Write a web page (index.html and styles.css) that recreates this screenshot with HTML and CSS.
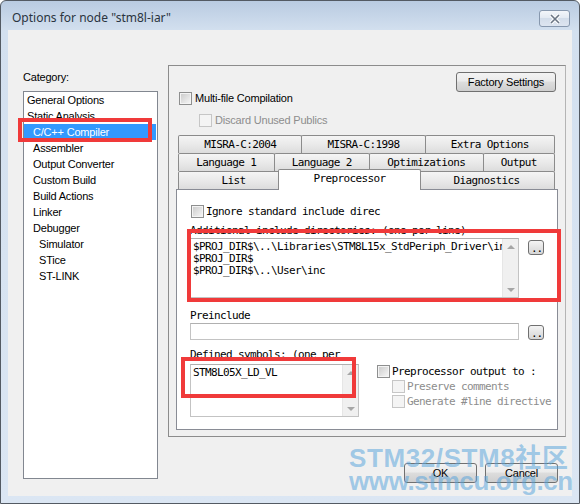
FILE: index.html
```html
<!DOCTYPE html>
<html lang="en">
<head>
    <meta charset="UTF-8">
    <title>Options for node "stm8l-iar"</title>
    <link rel="stylesheet" href="styles.css">
</head>
<body>
    <div class="window">
        <div class="titlebar">
            <span class="title">Options for node "stm8l-iar"</span>
            <button class="close">
                <svg width="12" height="10" viewBox="0 0 12 10">
                    <path d="M2 1 L10 9 M10 1 L2 9" stroke="#fdfdfd" stroke-width="3.6" fill="none"/>
                    <path d="M2 1 L10 9 M10 1 L2 9" stroke="#6a7584" stroke-width="1.6" fill="none"/>
                </svg>
            </button>
        </div>

        <div class="client">
            <div class="left-col">
                <div class="cat-label">Category:</div>
                <ul class="cat-list">
                    <li>General Options</li>
                    <li>Static Analysis</li>
                    <li class="lv1 selected">C/C++ Compiler</li>
                    <li class="lv1">Assembler</li>
                    <li class="lv1">Output Converter</li>
                    <li class="lv1">Custom Build</li>
                    <li class="lv1">Build Actions</li>
                    <li class="lv1">Linker</li>
                    <li class="lv1">Debugger</li>
                    <li class="lv2">Simulator</li>
                    <li class="lv2">STice</li>
                    <li class="lv2">ST-LINK</li>
                </ul>
            </div>

            <div class="right-col">
                <div class="group">
                    <div class="group-head">
                        <button class="btn factory">Factory Settings</button>
                    </div>
                    <div class="check multi"><span class="box"></span>Multi-file Compilation</div>
                    <div class="check discard disabled"><span class="box"></span>Discard Unused Publics</div>

                    <div class="tabs">
                        <div class="tab-row">
                            <div class="tab">MISRA-C:2004</div>
                            <div class="tab">MISRA-C:1998</div>
                            <div class="tab">Extra Options</div>
                        </div>
                        <div class="tab-row">
                            <div class="tab">Language 1</div>
                            <div class="tab">Language 2</div>
                            <div class="tab">Optimizations</div>
                            <div class="tab">Output</div>
                        </div>
                        <div class="tab-row">
                            <div class="tab tab-list">List</div>
                            <div class="tab active">Preprocessor</div>
                            <div class="tab">Diagnostics</div>
                        </div>
                    </div>

                    <div class="page">
                        <div class="check mono ignore"><span class="box"></span>Ignore standard include direc</div>

                        <div class="field-label inc-label">Additional include directories: (one per line)</div>
                        <div class="field-row">
                            <div class="textbox inc-box">
                                <div class="text">$PROJ_DIR$\..\Libraries\STM8L15x_StdPeriph_Driver\inc
$PROJ_DIR$
$PROJ_DIR$\..\User\inc</div>
                                <div class="scroll"><span class="arrow-up"></span><span class="arrow-down"></span></div>
                            </div>
                            <button class="browse">..</button>
                        </div>

                        <div class="field-label pre-label">Preinclude</div>
                        <div class="field-row">
                            <div class="textbox pre-box"></div>
                            <button class="browse">..</button>
                        </div>

                        <div class="field-label def-label">Defined symbols: (one per</div>
                        <div class="field-row def-row">
                            <div class="textbox def-box">
                                <div class="text">STM8L05X_LD_VL</div>
                                <div class="scroll"><span class="arrow-up"></span><span class="arrow-down"></span></div>
                            </div>
                            <div class="pp-opts">
                                <div class="check mono"><span class="box"></span>Preprocessor output to :</div>
                                <div class="check mono disabled sub"><span class="box"></span>Preserve comments</div>
                                <div class="check mono disabled sub"><span class="box"></span>Generate #line directive</div>
                            </div>
                        </div>
                    </div>
                </div>

                <div class="dialog-buttons">
                    <button class="btn wide">OK</button>
                    <button class="btn wide">Cancel</button>
                </div>
            </div>
        </div>

        <!-- red highlight frames -->
        <div class="mark mark-cat"></div>
        <div class="mark mark-inc"></div>
        <div class="mark mark-def"></div>

        <div class="watermark">
            <div class="wm-name">STM32/STM8社区</div>
            <div class="wm-site">www.stmcu.org.cn</div>
        </div>
    </div>
</body>
</html>
```

FILE: styles.css
```css
body {
    margin: 0;
    background: #fff;
}
.window {
    position: relative;
    width: 580px;
    height: 504px;
    box-sizing: border-box;
    border: 1px solid #535a63;
    border-radius: 6px 6px 0 0;
    background: linear-gradient(#b9cbe1, #d3e0ef 30px, #dbe6f3);
    padding: 0 7px 7px 7px;
    display: flex;
    flex-direction: column;
    overflow: hidden;
    font-family: "Liberation Sans", Arial, sans-serif;
    font-size: 11px;
    letter-spacing: -0.2px;
    color: #000;
}
.titlebar {
    height: 29px;
    display: flex;
    align-items: flex-start;
    padding-left: 4px;
}
.title {
    margin-top: 9px;
    font-family: "Noto Sans", sans-serif;
    font-size: 12px;
    line-height: 16px;
    letter-spacing: 0;
    color: #2a3440;
}
.close {
    margin: 9px 2px 0 auto;
    width: 31px;
    height: 17px;
    padding: 0;
    box-sizing: border-box;
    border: 1px solid #8798ae;
    border-radius: 3px;
    background: linear-gradient(#f3f6fa, #e2e9f2 50%, #d3ddea 50%, #dde5f0);
    display: flex;
    align-items: center;
    justify-content: center;
}
.client {
    flex: 1;
    background: #f0f0f0;
    display: flex;
    gap: 10px;
    padding: 35px 6px 0 15px;
    box-sizing: border-box;
}
.left-col {
    width: 135px;
}
.cat-label {
    margin-top: 5px;
    line-height: 14px;
}
.cat-list {
    margin: 7px 0 0;
    padding: 0;
    list-style: none;
    height: 388px;
    box-sizing: border-box;
    border: 1px solid #828790;
    background: #fff;
}
.cat-list li {
    height: 16px;
    line-height: 16px;
    padding-left: 3px;
    white-space: nowrap;
}
.cat-list .lv1 {
    padding-left: 9px;
}
.cat-list .lv2 {
    padding-left: 15px;
}
.cat-list .selected {
    background: #3399ff;
    color: #fff;
    margin-right: 1px;
}
.right-col {
    width: 398px;
    display: flex;
    flex-direction: column;
}
.group {
    height: 372px;
    box-sizing: border-box;
    border: 1px solid #8c8c8c;
    border-right-color: #b4b4b4;
    padding: 6px 7px;
    display: flex;
    flex-direction: column;
}
.group-head {
    display: flex;
    justify-content: flex-end;
    padding-right: 2px;
}
.btn {
    font-family: "Liberation Sans", Arial, sans-serif;
    font-size: 11px;
    letter-spacing: -0.2px;
    color: #000;
    height: 20px;
    padding: 0;
    box-sizing: border-box;
    border: 1px solid #707070;
    border-radius: 3px;
    background: linear-gradient(#f3f3f3, #ebebeb 45%, #dddddd 50%, #cfcfcf);
}
.factory {
    width: 100px;
}
.check {
    display: flex;
    align-items: center;
    gap: 3px;
    height: 13px;
    line-height: 13px;
    white-space: nowrap;
}
.check .box {
    flex: none;
    width: 13px;
    height: 13px;
    box-sizing: border-box;
    border: 1px solid #8e8f8f;
    background: linear-gradient(135deg, #c9c9c9, #f8f8f8);
    box-shadow: inset 0 0 0 1px #f4f4f4;
}
.check.disabled {
    color: #8d8d8d;
}
.check.disabled .box {
    border-color: #c6c6c6;
    background: #f4f4f4;
    box-shadow: none;
}
.multi {
    margin-left: 3px;
}
.discard {
    margin: 9px 0 0 23px;
}
.tabs {
    margin: 8px 3px 0 2px;
}
.tab-row {
    display: flex;
    align-items: flex-start;
    height: 18px;
}
.tab {
    flex: 1 1 auto;
    height: 18px;
    box-sizing: border-box;
    margin-left: -1px;
    border: 1px solid #8b8b8b;
    border-bottom: 0;
    border-radius: 2px 2px 0 0;
    background: linear-gradient(#f5f5f5, #e7e7e7 60%, #dcdcdc);
    text-align: center;
    font-family: "DejaVu Sans Mono", monospace;
    font-size: 11px;
    letter-spacing: -0.62px;
    line-height: 17px;
    white-space: nowrap;
}
.tab:first-child {
    margin-left: 0;
}
.tab-list {
    padding-left: 8px;
}
.tab.active {
    position: relative;
    z-index: 1;
    height: 21px;
    margin: -2px -2px 0 -3px;
    background: #fff;
    line-height: 18px;
}
.page {
    flex: 1;
    background: #fff;
    border: 1px solid #898c95;
    padding-left: 13px;
    font-family: "DejaVu Sans Mono", monospace;
    font-size: 11px;
    letter-spacing: -0.62px;
}
.check.mono {
    gap: 2px;
}
.ignore {
    margin: 15px 0 0 1px;
}
.field-label {
    height: 12px;
    line-height: 12px;
    white-space: nowrap;
}
.inc-label {
    margin-top: 7px;
}
.pre-label {
    margin-top: 12px;
}
.def-label {
    margin-top: 9px;
}
.field-row {
    display: flex;
    align-items: flex-start;
    margin-top: 1px;
}
.textbox {
    display: flex;
    box-sizing: border-box;
    border: 1px solid #c3c3c3;
    border-top-color: #b0b0b0;
    background: #fff;
}
.textbox .text {
    flex: 1;
    min-width: 0;
    padding: 2px 0 0 2px;
    line-height: 12px;
    overflow: hidden;
    white-space: pre;
}
.inc-box {
    width: 329px;
    height: 60px;
}
.pre-box {
    width: 329px;
    height: 17px;
}
.def-row {
    margin-top: 3px;
}
.def-box {
    width: 169px;
    height: 53px;
}
.scroll {
    width: 16px;
    box-sizing: border-box;
    background: #f0f0f0;
    border-left: 1px solid #e6e6e6;
    display: flex;
    flex-direction: column;
    justify-content: space-between;
    align-items: center;
    padding: 6px 0 5px;
}
.arrow-up {
    width: 0;
    height: 0;
    border-left: 4px solid transparent;
    border-right: 4px solid transparent;
    border-bottom: 4px solid #a6a6a6;
}
.arrow-down {
    width: 0;
    height: 0;
    border-left: 4px solid transparent;
    border-right: 4px solid transparent;
    border-top: 4px solid #a6a6a6;
}
.browse {
    width: 16px;
    height: 15px;
    margin: 2px 0 0 9px;
    padding: 0 0 0 1px;
    box-sizing: border-box;
    border: 1px solid #707070;
    border-radius: 3px;
    background: linear-gradient(#f4f4f4, #e4e4e4 50%, #d6d6d6);
    font-family: "DejaVu Sans Mono", monospace;
    font-size: 11px;
    letter-spacing: -1px;
    line-height: 16px;
    color: #000;
}
.pp-opts {
    margin: 1px 0 0 18px;
    display: flex;
    flex-direction: column;
    gap: 2px;
}
.pp-opts .sub {
    margin-left: 15px;
}
.dialog-buttons {
    display: flex;
    justify-content: flex-end;
    gap: 8px;
    margin: 26px 8px 0 0;
}
.btn.wide {
    width: 73px;
}
.mark {
    position: absolute;
    box-sizing: border-box;
    border: 4px solid #f03a3a;
}
.mark-cat {
    left: 17px;
    top: 117px;
    width: 134px;
    height: 24px;
}
.mark-inc {
    left: 186px;
    top: 228px;
    width: 374px;
    height: 73px;
}
.mark-def {
    left: 180px;
    top: 356px;
    width: 175px;
    height: 41px;
}
/* site stamp in the lower right corner */
.watermark {
    position: absolute;
    left: 348px;
    top: 447px;
    font-family: "Liberation Sans", "Noto Sans CJK SC", sans-serif;
    font-weight: bold;
    font-size: 26px;
    line-height: 21px;
    color: rgba(90, 165, 220, 0.55);
    white-space: nowrap;
    pointer-events: none;
}
.wm-name {
    letter-spacing: 0.6px;
}
.wm-site {
    margin-top: 2px;
    letter-spacing: -0.4px;
}
```
